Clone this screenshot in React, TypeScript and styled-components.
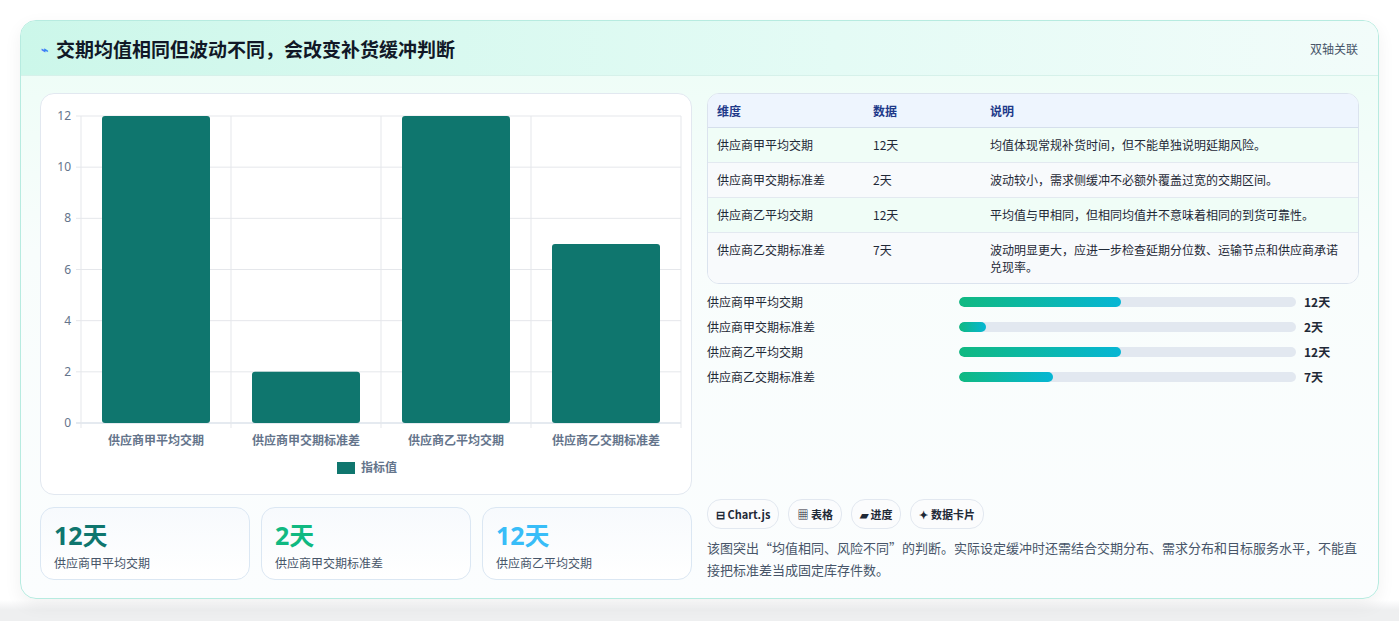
import React from "react";
import styled, { createGlobalStyle } from "styled-components";

const G = createGlobalStyle`
  html,body{margin:0;padding:0;background:linear-gradient(#fff 0,#fff 600px,#eeeff0 610px);}
  body{font-family:"Noto Sans CJK SC","Noto Sans",sans-serif;color:#1f2937;}
`;
const Page = styled.div`padding:20px 20px 22px 20px;height:621px;box-sizing:border-box;`;
const Card = styled.div`
  height:579px;box-sizing:border-box;border:1px solid #b7ebe0;border-radius:16px;overflow:hidden;
  background:linear-gradient(180deg,#ecfdf6 0%,#f8fdfc 40%,#fbfdfe 100%);
  box-shadow:0 6px 18px rgba(0,0,0,0.06);display:flex;flex-direction:column;`;
const Header = styled.div`
  height:55px;box-sizing:border-box;display:flex;align-items:center;justify-content:space-between;
  padding:0 20px;background:linear-gradient(90deg,#ccf7ea,#e4fbf5 60%,#f2fcfa);border-bottom:1px solid #d6f1ea;`;
const Title = styled.h2`margin:0;font-size:19px;font-weight:700;color:#111827;display:flex;align-items:center;gap:8px;`;
const Tag = styled.span`font-size:12px;color:#475569;`;
const Body = styled.div`flex:1;display:grid;grid-template-columns:652px 652px;gap:15px;padding:17px 19px 17px 19px;`;
const Col = styled.div`display:flex;flex-direction:column;gap:12px;`;
const ChartBox = styled.div`height:402px;box-sizing:border-box;background:#fff;border:1px solid #e2e8f0;border-radius:14px;`;
const Stats = styled.div`display:grid;grid-template-columns:repeat(3,1fr);gap:11px;`;
const Stat = styled.div`height:73px;box-sizing:border-box;border:1px solid #dbe7f3;border-radius:14px;background:linear-gradient(#f7fafd,#fff);padding:10px 13px;`;
const Big = styled.div<{ c: string }>`font-size:25px;font-weight:700;color:${p => p.c};line-height:34px;font-family:"Noto Sans","Noto Sans CJK SC",sans-serif;`;
const Small = styled.div`font-size:12px;color:#475569;margin-top:2px;`;
const Table = styled.table`width:100%;border-collapse:collapse;font-size:12px;`;
const TableWrap = styled.div`border:1px solid #dbe3ee;border-radius:12px;overflow:hidden;background:#fff;`;
const Th = styled.th`text-align:left;font-weight:600;color:#1e3a8a;background:#eef5fe;height:33px;padding:0 9px;border-bottom:1px solid #d5dfec;`;
const Tr = styled.tr<{ alt: boolean }>`background:${p => (p.alt ? "#f8fafc" : "#f0fdf7")};& td{border-bottom:1px solid #e3e9f0;}&:last-child td{border-bottom:none;}`;
const Td = styled.td`padding:8px 9px;line-height:17px;color:#1f2937;vertical-align:top;height:18px;`;
const Bars = styled.div`display:flex;flex-direction:column;gap:8px;margin-top:-3px;`;
const BarRow = styled.div`display:grid;grid-template-columns:244px 337px 1fr;gap:8px;align-items:center;font-size:12px;height:17px;`;
const Track = styled.div`height:10px;border-radius:5px;background:#e2e8f0;overflow:hidden;`;
const Fill = styled.div`height:100%;border-radius:5px;background:linear-gradient(90deg,#10b981,#06b6d4);`;
const BarVal = styled.span`font-weight:700;`;
const Spacer = styled.div`flex:1;`;
const Chips = styled.div`display:flex;gap:9px;`;
const Chip = styled.span`font-size:11px;font-weight:600;height:28px;padding:0 8px;display:inline-flex;align-items:center;gap:4px;border:1px solid #e2e8f0;border-radius:14px;background:#fbfcfd;color:#1f2937;`;
const Note = styled.p`margin:8px 0 0;font-size:13px;line-height:22px;color:#475569;`;

const rows = [
  ["供应商甲平均交期", "12天", "均值体现常规补货时间，但不能单独说明延期风险。"],
  ["供应商甲交期标准差", "2天", "波动较小，需求侧缓冲不必额外覆盖过宽的交期区间。"],
  ["供应商乙平均交期", "12天", "平均值与甲相同，但相同均值并不意味着相同的到货可靠性。"],
  ["供应商乙交期标准差", "7天", "波动明显更大，应进一步检查延期分位数、运输节点和供应商承诺兑现率。"],
];
const vals = [12, 2, 12, 7];

function Chart() {
  const x0 = 40, x1 = 640, y0 = 329, top = 22, h = y0 - top;
  const yy = (v: number) => y0 - (v / 12) * h;
  return (
    <svg width="652" height="402" viewBox="0 0 652 402" style={{ display: "block" }}>
      {[0, 2, 4, 6, 8, 10, 12].map(v => (
        <g key={v}>
          <line x1={x0 - 5} x2={x1} y1={yy(v)} y2={yy(v)} stroke={v === 0 ? "#cbd5e1" : "#e5e7eb"} />
          <text x={30} y={yy(v) + 4} fontSize="12" fill="#64748b" textAnchor="end" fontFamily="Noto Sans">{v}</text>
        </g>
      ))}
      {[0, 1, 2, 3, 4].map(i => (
        <line key={i} x1={x0 + i * 150} x2={x0 + i * 150} y1={top} y2={y0 + 5} stroke="#e5e7eb" />
      ))}
      {vals.map((v, i) => (
        <rect key={i} x={x0 + i * 150 + 21} y={yy(v)} width={108} height={y0 - yy(v)} rx={3} fill="#0f766e" />
      ))}
      {rows.map((r, i) => (
        <text key={i} x={x0 + i * 150 + 75} y={351} fontSize="12" fill="#64748b" textAnchor="middle" fontFamily="Noto Sans CJK SC" fontWeight="600">{r[0]}</text>
      ))}
      <rect x={296} y={368} width={18} height={12} fill="#0f766e" />
      <text x={320} y={378} fontSize="12" fill="#64748b" fontFamily="Noto Sans CJK SC" fontWeight="600">指标值</text>
    </svg>
  );
}

export default function App() {
  return (
    <Page>
      <G />
      <Card>
        <Header>
          <Title><span style={{ color: "#3b82f6", fontSize: 12 }}>⌁</span>交期均值相同但波动不同，会改变补货缓冲判断</Title>
          <Tag>双轴关联</Tag>
        </Header>
        <Body>
          <Col>
            <ChartBox><Chart /></ChartBox>
            <Stats>
              <Stat><Big c="#0f766e">12天</Big><Small>供应商甲平均交期</Small></Stat>
              <Stat><Big c="#10b981">2天</Big><Small>供应商甲交期标准差</Small></Stat>
              <Stat><Big c="#38bdf8">12天</Big><Small>供应商乙平均交期</Small></Stat>
            </Stats>
          </Col>
          <Col>
            <TableWrap>
              <Table>
                <thead><tr><Th style={{ width: 138 }}>维度</Th><Th style={{ width: 99 }}>数据</Th><Th>说明</Th></tr></thead>
                <tbody>
                  {rows.map((r, i) => (
                    <Tr key={i} alt={i % 2 === 1}><Td>{r[0]}</Td><Td>{r[1]}</Td><Td>{r[2]}</Td></Tr>
                  ))}
                </tbody>
              </Table>
            </TableWrap>
            <Bars>
              {rows.map((r, i) => (
                <BarRow key={i}>
                  <span>{r[0]}</span>
                  <Track><Fill style={{ width: `${(vals[i] / 25) * 100}%` }} /></Track>
                  <BarVal>{r[1]}</BarVal>
                </BarRow>
              ))}
            </Bars>
            <Spacer />
            <div>
              <Chips>
                <Chip>⊟ Chart.js</Chip><Chip>▦ 表格</Chip><Chip>▰ 进度</Chip><Chip>✦ 数据卡片</Chip>
              </Chips>
              <Note>该图突出“均值相同、风险不同”的判断。实际设定缓冲时还需结合交期分布、需求分布和目标服务水平，不能直接把标准差当成固定库存件数。</Note>
            </div>
          </Col>
        </Body>
      </Card>
    </Page>
  );
}
